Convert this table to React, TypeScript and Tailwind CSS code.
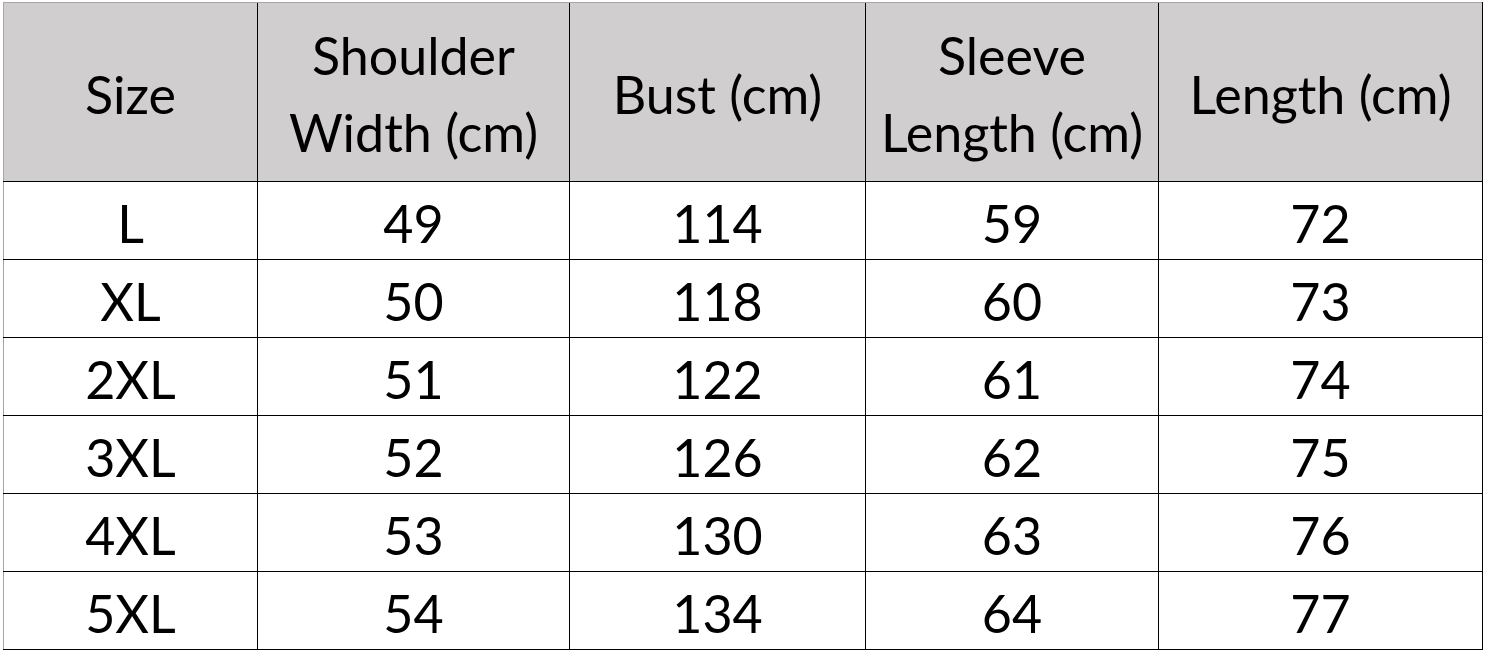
import React from 'react';

const rows = [
  ['L', '49', '114', '59', '72'],
  ['XL', '50', '118', '60', '73'],
  ['2XL', '51', '122', '61', '74'],
  ['3XL', '52', '126', '62', '75'],
  ['4XL', '53', '130', '63', '76'],
  ['5XL', '54', '134', '64', '77'],
];

const headers: React.ReactNode[] = [
  'Size',
  <>Shoulder<br />Width (cm)</>,
  'Bust (cm)',
  <>Sleeve<br />Length (cm)</>,
  'Length (cm)',
];

const widths = ['w-[254px]', 'w-[312px]', 'w-[296px]', 'w-[293px]', 'w-[324px]'];

export default function App() {
  return (
    <div className="w-[1486px] h-[653px] bg-white pt-[2px] pl-[3px] overflow-hidden font-['Lato',sans-serif] text-black">
      <table className="border-collapse table-fixed">
        <thead>
          <tr className="h-[179px] bg-[#d0cece]">
            {headers.map((h, i) => (
              <th
                key={i}
                className={`${widths[i]} p-0 font-normal text-[52px] leading-[77px] text-center border-t border-t-[#a6a6a6] border-b border-b-black ${i === 0 ? 'border-l border-l-[#a6a6a6]' : 'border-l border-l-black'} ${i === 4 ? 'border-r border-r-black' : ''}`}
              >
                <div className="pt-[4px]">{h}</div>
              </th>
            ))}
          </tr>
        </thead>
        <tbody>
          {rows.map((r, ri) => (
            <tr key={ri} className="h-[78px]">
              {r.map((c, ci) => (
                <td
                  key={ci}
                  className={`p-0 pt-[4px] text-[52px] leading-none text-center border-b border-b-black ${ci === 0 ? 'border-l border-l-[#a6a6a6]' : 'border-l border-l-black'} ${ci === 4 ? 'border-r border-r-black' : ''}`}
                >
                  {c}
                </td>
              ))}
            </tr>
          ))}
        </tbody>
      </table>
    </div>
  );
}
